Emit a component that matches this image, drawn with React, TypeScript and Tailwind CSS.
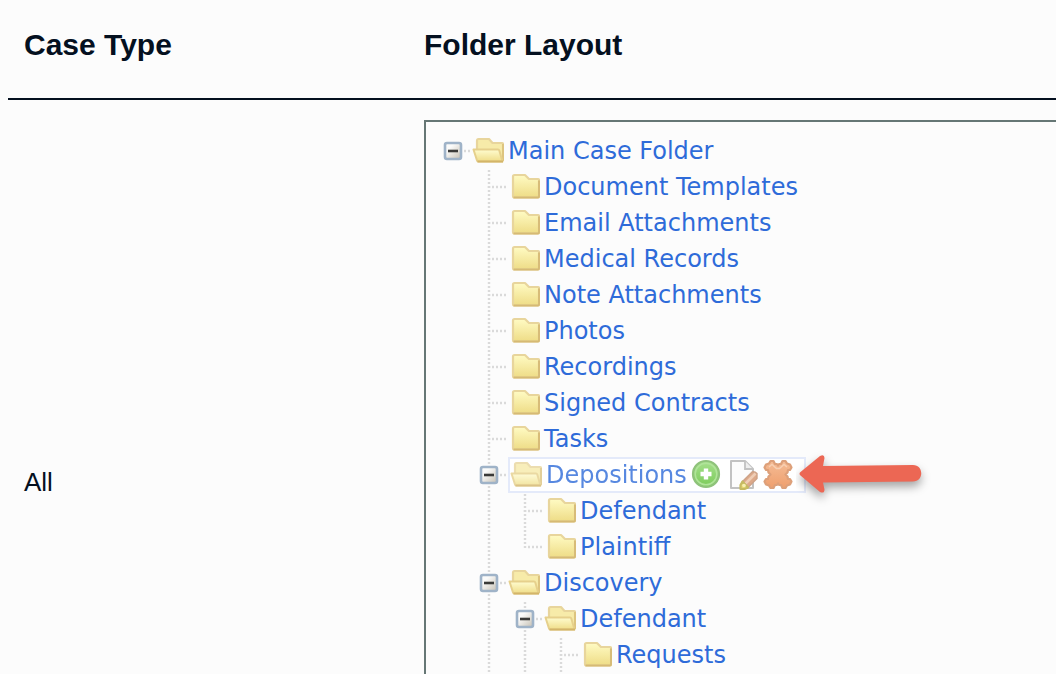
import { useState } from "react";
import clsx from "clsx";

type FolderNode = {
  name: string;
  selected?: boolean;
  hasNext?: boolean;
  children?: FolderNode[];
};

const folders: FolderNode = {
  name: "Main Case Folder",
  children: [
    { name: "Document Templates" },
    { name: "Email Attachments" },
    { name: "Medical Records" },
    { name: "Note Attachments" },
    { name: "Photos" },
    { name: "Recordings" },
    { name: "Signed Contracts" },
    { name: "Tasks" },
    {
      name: "Depositions",
      selected: true,
      children: [{ name: "Defendant" }, { name: "Plaintiff" }],
    },
    {
      name: "Discovery",
      hasNext: true,
      children: [
        {
          name: "Defendant",
          hasNext: true,
          children: [{ name: "Requests", hasNext: true }],
        },
      ],
    },
  ],
};

// One 36px column of dotted guide lines
const Guide = ({ top = false, bottom = false, branch = false }) => (
  <svg className="size-9 shrink-0" viewBox="0 0 36 36" fill="none" stroke="#dadada" strokeWidth="2.400" strokeDasharray="2 2" aria-hidden="true">
    {top && <path d="M17 1V19" />}
    {bottom && <path d="M17 17V36" />}
    {branch && <path d="M20 18H35" />}
  </svg>
);

const FolderIcon = () => (
  <svg className="size-8 shrink-0" viewBox="0 0 32 32" aria-hidden="true">
    <defs>
      <linearGradient id="closed" x1="0" y1="0" x2="0" y2="1">
        <stop offset="0" stopColor="#fffbc4" />
        <stop offset="1" stopColor="#eedc86" />
      </linearGradient>
    </defs>
    <path d="M5 5.500Q5 4 6.500 4H17L21 8H30Q31 8 31 9V25.500Q31 26.500 30 26.500H6.500Q5 26.500 5 25Z" fill="url(#closed)" stroke="#e8d59c" strokeWidth="2.200" strokeLinejoin="round" />
    <path d="M5.500 26.500H30Q31 26.500 31 25.500V9.500" fill="none" stroke="#d6ba74" strokeWidth="1.800" />
  </svg>
);

const OpenFolderIcon = () => (
  <svg className="size-8 shrink-0" viewBox="0 0 32 32" aria-hidden="true">
    <defs>
      <linearGradient id="open" x1="0" y1="0" x2="0" y2="1">
        <stop offset="0" stopColor="#fffcd0" />
        <stop offset="1" stopColor="#efdd88" />
      </linearGradient>
    </defs>
    <path d="M5 17V6Q5 4 6.500 4H17L20.500 8H30Q31 8 31 9V25H8Z" fill="#f7eba9" stroke="#e8d59c" strokeWidth="2.200" strokeLinejoin="round" />
    <path d="M31 9V26" stroke="#dcc27d" strokeWidth="1.800" />
    <path d="M1.500 14.500H26Q27 14.500 27.300 15.500L30.500 26.500H6.500Q5.500 26.500 5 25.500Z" fill="url(#open)" stroke="#e6d08c" strokeWidth="2" strokeLinejoin="round" />
    <path d="M5.500 26.500H31" stroke="#d3b569" strokeWidth="2" />
  </svg>
);

const ToggleIcon = ({ open }: { open: boolean }) => (
  <svg className="size-9" viewBox="0 0 36 36" aria-hidden="true">
    <defs>
      <linearGradient id="toggle" x1="0" y1="0" x2="1" y2="1">
        <stop offset="0.3" stopColor="#fbfbfa" />
        <stop offset="1" stopColor="#c5bfb2" />
      </linearGradient>
    </defs>
    <path d="M28 18H35" stroke="#dadada" strokeWidth="2.400" strokeDasharray="2 2" />
    <rect x="9" y="10" width="16" height="16" rx="2" fill="url(#toggle)" stroke="#9fb3c8" strokeWidth="2.600" />
    <path d="M12 18H22" stroke="#3a3a38" strokeWidth="2.600" />
    {!open && <path d="M17 13V23" stroke="#3a3a38" strokeWidth="2.600" />}
  </svg>
);

const AddIcon = () => (
  <svg className="size-8" viewBox="0 0 32 32" aria-hidden="true">
    <defs>
      <linearGradient id="add" x1="0" y1="0" x2="0" y2="1">
        <stop offset="0" stopColor="#a5e08c" />
        <stop offset="1" stopColor="#7ccb5a" />
      </linearGradient>
    </defs>
    <circle cx="16" cy="15" r="13" fill="url(#add)" stroke="#8fc27b" strokeWidth="2.200" />
    <circle cx="16" cy="15" r="10.800" fill="none" stroke="#b0e39a" strokeWidth="1.500" />
    <path d="M16 9.500V20.500M10.500 15H21.500" stroke="#ffffff" strokeWidth="4.400" strokeLinejoin="round" />
  </svg>
);

const EditIcon = () => (
  <svg className="size-8" viewBox="0 0 32 32" aria-hidden="true">
    <path d="M5 2H19L27 10V29H5Z" fill="#fcfcfc" stroke="#c2c2c2" strokeWidth="2" strokeLinejoin="round" />
    <path d="M19 2V10H27" fill="#eeeeee" stroke="#c2c2c2" strokeWidth="1.800" />
    <path d="M16.500 22.500L26 13Q28.500 12 31 14.500V19.500L22 28.500Z" fill="#dda98a" stroke="#cda287" strokeWidth="1.400" />
    <path d="M19.500 24.500L29.500 14.500" stroke="#efcdb5" strokeWidth="2.600" />
    <path d="M16.500 22.500L14.500 26V30H18.500L22 28.500Z" fill="#e5d56d" stroke="#c6ba62" strokeWidth="2.200" strokeLinejoin="round" />
    <circle cx="18" cy="26.500" r="1.800" fill="#f6efb1" />
  </svg>
);

const DeleteIcon = () => (
  <svg className="size-8" viewBox="0 0 32 32" aria-hidden="true">
    <defs>
      <linearGradient id="delete" x1="0" y1="0" x2="0" y2="1">
        <stop offset="0" stopColor="#f4bc96" />
        <stop offset="1" stopColor="#ef9f6d" />
      </linearGradient>
    </defs>
    <path
      d="M8.500 2H11.500L13 5H15L16 6.500L17 5H19L20.500 2H23.500L25 4.500L28 5.500L29.500 8.500L28 11H26L25.500 13.500L23.500 15.500L25.500 17.500L26 20H28L29.500 22.500L28 25.500L25 26.500L23.500 29H20.500L19 26H17L16 24.500L15 26H13L11.500 29H8.500L7 26.500L4 25.500L2.500 22.500L4 20H6L6.500 17.500L8.500 15.500L6.500 13.500L6 11H4L2.500 8.500L4 5.500L7 4.500Z"
      fill="url(#delete)"
      stroke="#dda07a"
      strokeWidth="2.200"
      strokeLinejoin="round"
    />
    <path d="M7 8L10 5.500L14.500 9.500H17.500L22 5.500L25 8" fill="none" stroke="#f8d0b3" strokeWidth="1.400" />
  </svg>
);

const Arrow = () => (
  <svg className="pointer-events-none absolute top-1/2 left-full -ml-2 h-16 w-36 -translate-y-1/2" viewBox="0 0 144 64" aria-hidden="true">
    <path
      d="M4.500 29L24 13Q28.500 11 28.500 15L27 23L117 22C128 22 128 38.500 117 38.500L27 39.500L28.500 46.500Q28.500 51 24 49L4.500 32.500Q2.500 30.500 4.500 29Z"
      fill="#ec6754"
      className="drop-shadow-[0_5px_5px_rgba(0,0,0,0.35)]"
    />
  </svg>
);

const actions = [
  { label: "Add folder", Icon: AddIcon },
  { label: "Rename folder", Icon: EditIcon },
  { label: "Delete folder", Icon: DeleteIcon },
];

type TreeItemProps = { node: FolderNode; guides?: boolean[]; root?: boolean; last?: boolean };

const TreeItem = ({ node, guides = [], root = false, last = false }: TreeItemProps) => {
  const [open, setOpen] = useState(true);
  const continues = !root && !last;

  return (
    <li>
      <div className="flex h-9 items-center">
        {guides.map((line, i) => (
          <Guide key={i} top={line} bottom={line} />
        ))}
        {node.children ? (
          <button
            type="button"
            aria-label={`Toggle ${node.name}`}
            aria-expanded={open}
            onClick={() => setOpen(!open)}
            className="grid size-9 shrink-0 *:col-start-1 *:row-start-1"
          >
            <Guide top={!root} bottom={continues} />
            <ToggleIcon open={open} />
          </button>
        ) : (
          <Guide top bottom={continues} branch />
        )}
        <div className={clsx("flex h-9 items-center", node.selected && "relative border-2 border-[#e4eafa] bg-white pr-2.5")}>
          <a
            href="#"
            className={clsx("flex items-center gap-1 whitespace-nowrap text-[#2e6bd9]", node.selected && "opacity-80")}
          >
            {node.children && open ? <OpenFolderIcon /> : <FolderIcon />}
            {node.name}
          </a>
          {node.selected && (
            <>
              <div className="ml-[3px] flex gap-1">
                {actions.map(({ label, Icon }) => (
                  <button key={label} type="button" aria-label={label}>
                    <Icon />
                  </button>
                ))}
              </div>
              <Arrow />
            </>
          )}
        </div>
      </div>
      {node.children && open && (
        <ul>
          {node.children.map((child, i) => (
            <TreeItem
              key={child.name}
              node={child}
              guides={[...guides, continues]}
              last={i === node.children!.length - 1 && !child.hasNext}
            />
          ))}
        </ul>
      )}
    </li>
  );
};

export default function App() {
  return (
    <main className="h-screen overflow-hidden bg-[#fcfcfc] pt-2 pl-2 font-['Liberation_Sans',Arial,sans-serif] text-[#04101f]">
      <table className="w-full table-fixed border-collapse">
        <thead>
          <tr className="border-b-2 border-[#04101f] text-left text-[30px] leading-9">
            <th className="w-[400px] px-4 pt-[19px] pb-[35px]">Case Type</th>
            <th className="px-4 pt-[19px] pb-[35px]">Folder Layout</th>
          </tr>
        </thead>
        <tbody>
          <tr>
            <td className="px-4 align-middle text-[26px]">All</td>
            <td className="py-5 pl-4">
              <div className="min-h-[724px] border-2 border-r-0 border-[#667775] py-[11px] pl-2.5 font-['DejaVu_Sans',Verdana,sans-serif] text-2xl">
                <ul>
                  <TreeItem node={folders} root />
                </ul>
              </div>
            </td>
          </tr>
        </tbody>
      </table>
    </main>
  );
}
